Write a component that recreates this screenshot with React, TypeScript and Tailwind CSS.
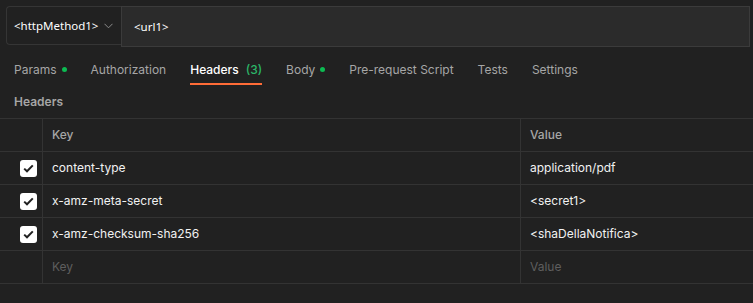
import React from 'react';

const rows = [
    { key: 'content-type', value: 'application/pdf' },
    { key: 'x-amz-meta-secret', value: '<secret1>' },
    { key: 'x-amz-checksum-sha256', value: '<shaDellaNotifica>' },
];

const tabs = [
    { label: 'Params', dot: true },
    { label: 'Authorization' },
    { label: 'Headers', count: '(3)', active: true },
    { label: 'Body', dot: true },
    { label: 'Pre-request Script' },
    { label: 'Tests' },
    { label: 'Settings' },
];

function Check() {
    return (
        <div className="w-[17px] h-[17px] rounded-[3px] bg-white flex items-center justify-center">
            <svg width="11" height="9" viewBox="0 0 11 9" fill="none">
                <path d="M1.2 4.6 L4 7.3 L9.8 1.4" stroke="#212121" strokeWidth="2" />
            </svg>
        </div>
    );
}

export default function App() {
    return (
        <div className="w-[753px] h-[303px] bg-[#212121] overflow-hidden" style={{ fontFamily: 'Inter, sans-serif' }}>
            {/* request bar */}
            <div className="flex pt-[6px] pl-[6px] pr-[3px]">
                <div className="w-[115px] h-[39px] flex items-center pl-[7px] border border-r-0 border-[#353535] rounded-l-[4px] text-[#ffffff] text-[11.5px]" style={{ fontFamily: '"Noto Sans", sans-serif' }}>
                    <span>&lt;httpMethod1&gt;</span>
                    <svg className="ml-[6px] shrink-0" width="9" height="6" viewBox="0 0 9 6" fill="none">
                        <path d="M0.5 0.8 L4.5 4.8 L8.5 0.8" stroke="#8c8c8c" strokeWidth="1" />
                    </svg>
                </div>
                <div className="flex-1 h-[41px] flex items-center pl-[12px] bg-[#2b2b2b] border border-[#3b3b3b] text-[#ffffff] text-[11.5px]" style={{ fontFamily: '"Noto Sans", sans-serif' }}>
                    &lt;url1&gt;
                </div>
            </div>

            {/* tabs */}
            <div className="flex gap-[24px] pl-[14px] mt-[8px] text-[12px]">
                {tabs.map(t => (
                    <div key={t.label} className={`h-[29px] flex items-center relative ${t.active ? 'text-white font-medium' : 'text-[#a6a6a6]'}`}>
                        <span>{t.label}</span>
                        {t.count && <span className="ml-[7px] text-[#2bb567]">{t.count}</span>}
                        {t.dot && <span className="ml-[5px] w-[5px] h-[5px] rounded-full bg-[#0cbb52]" />}
                        {t.active && <span className="absolute left-0 right-0 bottom-[-1px] h-[2px] bg-[#ff6c37]" />}
                    </div>
                ))}
            </div>

            <div className="pl-[14px] mt-[5px] h-[26px] flex items-center text-[12px] font-semibold text-[#a6a6a6]">Headers</div>

            {/* table */}
            <div className="mt-[3px] border-t border-[#333333] text-[12px]">
                <div className="flex h-[33px] border-b border-[#333333]">
                    <div className="w-[43px] border-r border-[#333333]" />
                    <div className="w-[478px] border-r border-[#333333] flex items-center pl-[9px] font-medium text-[#a6a6a6]">Key</div>
                    <div className="flex-1 flex items-center pl-[9px] font-medium text-[#a6a6a6]">Value</div>
                </div>
                {rows.map(r => (
                    <div key={r.key} className="flex h-[33px] border-b border-[#333333]">
                        <div className="w-[43px] border-r border-[#333333] flex items-center pl-[20px]">
                            <Check />
                        </div>
                        <div className="w-[478px] border-r border-[#333333] flex items-center pl-[9px] text-[#f2f2f2]">{r.key}</div>
                        <div className="flex-1 flex items-center pl-[9px] text-[#f2f2f2]">{r.value}</div>
                    </div>
                ))}
                <div className="flex h-[33px] border-b border-[#333333]">
                    <div className="w-[43px] border-r border-[#333333]" />
                    <div className="w-[478px] border-r border-[#333333] flex items-center pl-[9px] text-[#5e5e5e]">Key</div>
                    <div className="flex-1 flex items-center pl-[9px] text-[#5e5e5e]">Value</div>
                </div>
            </div>
        </div>
    );
}
